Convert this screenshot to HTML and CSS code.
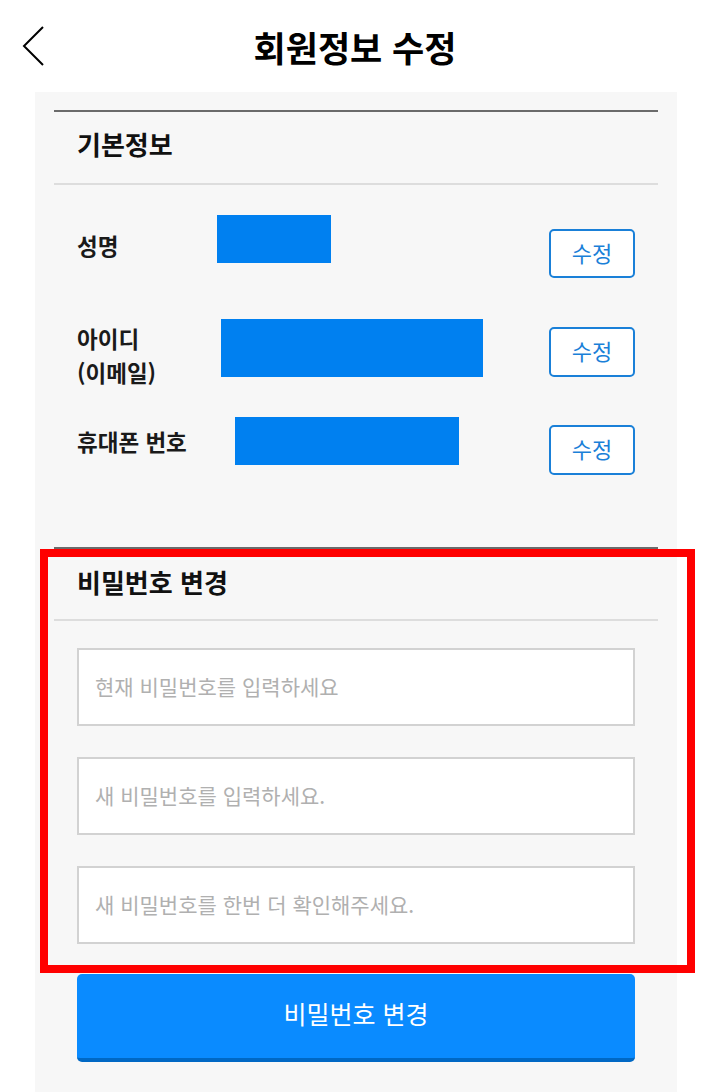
FILE: index.html
```html
<!DOCTYPE html>
<html lang="ko">
<head>
<meta charset="utf-8">
<title>회원정보 수정</title>
<link rel="stylesheet" href="styles.css">
</head>
<body>
<header class="topbar">
  <a class="back" aria-label="뒤로">
    <svg width="24" height="44" viewBox="0 0 24 44"><polyline points="22,2 3,21 22,40" fill="none" stroke="#000" stroke-width="2"/></svg>
  </a>
  <h1 class="title">회원정보 수정</h1>
  <span></span>
</header>

<main class="panel">
  <section class="section">
    <h2 class="section-title">기본정보</h2>
    <div class="rows">
      <div class="row row-1">
        <span class="label">성명</span>
        <span class="value"><span class="redact redact-1"></span></span>
        <button class="edit">수정</button>
      </div>
      <div class="row row-2">
        <span class="label">아이디<br>(이메일)</span>
        <span class="value"><span class="redact redact-2"></span></span>
        <button class="edit">수정</button>
      </div>
      <div class="row row-3">
        <span class="label">휴대폰 번호</span>
        <span class="value"><span class="redact redact-3"></span></span>
        <button class="edit">수정</button>
      </div>
    </div>
  </section>

  <section class="section">
    <h2 class="section-title">비밀번호 변경</h2>
    <div class="fields">
      <input class="field" type="password" placeholder="현재 비밀번호를 입력하세요">
      <input class="field" type="password" placeholder="새 비밀번호를 입력하세요.">
      <input class="field" type="password" placeholder="새 비밀번호를 한번 더 확인해주세요.">
    </div>
  </section>
  <div class="submit-wrap">
    <button class="submit">비밀번호 변경</button>
  </div>
</main>

<div class="highlight"></div>
</body>
</html>
```

FILE: styles.css
```css
* { box-sizing: border-box; }

html, body {
  margin: 0;
  padding: 0;
  background: #fff;
}

body {
  width: 721px;
  height: 1092px;
  overflow: hidden;
  position: relative;
  font-family: "Noto Sans CJK KR", "Noto Sans", sans-serif;
  color: #111;
}

.topbar {
  height: 92px;
  display: grid;
  grid-template-columns: 60px 1fr 60px;
  align-items: center;
  padding-right: 11px;
}

.back {
  display: block;
  padding-left: 21px;
  height: 44px;
  margin-top: 2px;
}
.back svg { display: block; }

.title {
  margin: 0;
  text-align: center;
  font-size: 35px;
  font-weight: 700;
  line-height: 40px;
  color: #000;
  margin-top: 2px;
}

.panel {
  margin-left: 35px;
  width: 642px;
  height: 1000px;
  background: #f7f7f7;
  padding: 18px 19px 30px;
}

.section {
  border-top: 2px solid #6b6b6b;
}

.section-title {
  margin: 0;
  padding: 18px 0 25px 23px;
  font-size: 26px;
  line-height: 28px;
  font-weight: 700;
  color: #111;
  border-bottom: 2px solid #dddddd;
}

.section + .section .section-title {
  padding-top: 19px;
  padding-bottom: 23px;
}

.rows {
  padding-top: 30px;
}

.row {
  display: grid;
  grid-template-columns: 140px 1fr 86px;
  align-items: start;
  padding-left: 23px;
  padding-right: 23px;
}
.row-1 { height: 104px; }
.row-2 { height: 98px; }
.row-3 { height: 130px; }

.label {
  font-size: 22.5px;
  line-height: 34px;
  font-weight: 700;
  color: #1a1a1a;
  white-space: nowrap;
}
.row-1 .label { margin-top: 13px; }
.row-2 .label { margin-top: 2px; }
.row-3 .label { margin-top: 7px; }

.value { display: block; }

.redact {
  display: block;
  background: #0080f0;
}
.redact-1 { width: 114px; height: 48px; }
.redact-2 { width: 262px; height: 58px; margin-left: 4px; }
.redact-3 { width: 224px; height: 48px; margin-left: 18px; }

.edit {
  width: 86px;
  height: 50px;
  border: 2px solid #1a80d8;
  border-radius: 5px;
  background: #fff;
  color: #1a80d8;
  font-family: inherit;
  font-size: 22px;
  padding: 0 0 4px;
  line-height: 1;
}
.row-1 .edit { margin-top: 14px; height: 49px; }
.row-2 .edit { margin-top: 8px; }
.row-3 .edit { margin-top: 8px; }

.fields {
  padding: 27px 23px 0;
  display: flex;
  flex-direction: column;
  gap: 31px;
}

.field {
  display: block;
  width: 100%;
  height: 78px;
  border: 2px solid #d2d2d2;
  background: #fff;
  padding: 0 16px 3px;
  font-family: inherit;
  font-size: 21px;
  color: #333;
  outline: none;
}
.field::placeholder {
  color: #b0b0b0;
}

.submit-wrap {
  padding: 30px 23px 0;
}

.submit {
  display: block;
  width: 100%;
  height: 88px;
  border: none;
  border-bottom: 4px solid #0068c4;
  border-radius: 5px;
  background: #0a8bff;
  color: #fff;
  font-family: inherit;
  font-size: 25px;
  padding: 0 0 6px;
}

.highlight {
  position: absolute;
  left: 40px;
  top: 549px;
  width: 655px;
  height: 424px;
  border: 8px solid #ff0000;
  pointer-events: none;
}
```
